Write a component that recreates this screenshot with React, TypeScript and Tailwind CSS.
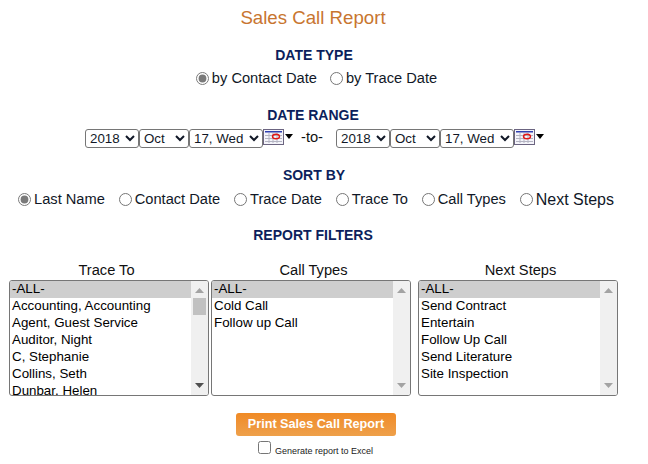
import React from "react";

const navy = "text-center font-bold text-[14px] leading-[16px] text-[#0c1f5c]";

function Radio({ label, checked, name, big }: { label: string; checked?: boolean; name: string; big?: boolean }) {
  return (
    <label className={`flex items-center leading-[17px] text-[#111827] ${big ? "text-[16px]" : "text-[14.67px]"}`}>
      <input type="radio" name={name} defaultChecked={checked} className="m-0 mr-[3px] h-[13px] w-[13px] accent-[#7a7a7a]" />
      {label}
    </label>
  );
}

function DateSel() {
  const cls = "h-[19px] rounded-[3px] border border-[#767676] bg-white text-[13.33px] text-[#111827]";
  return (
    <div className="flex items-start">
      <select className={`${cls} w-[54px]`} defaultValue="2018"><option>2018</option></select>
      <select className={`${cls} w-[50px]`} defaultValue="Oct"><option>Oct</option></select>
      <select className={`${cls} w-[74px]`} defaultValue="17, Wed"><option>17, Wed</option></select>
      <svg width="21" height="16" viewBox="0 0 21 16" className="block">
        <rect x="0.5" y="0.5" width="20" height="15" fill="#f4f4fa" stroke="#6b6480" />
        <rect x="2" y="2" width="17" height="1.5" fill="#2f3fb0" />
        <path d="M2 6.5h17M2 9.5h17M2 12.5h17M6 4v10M10 4v10M14 4v10" stroke="#b4b4c2" strokeWidth="1" />
        <ellipse cx="13" cy="7.5" rx="3.5" ry="2.2" fill="none" stroke="#e01818" strokeWidth="1.4" />
      </svg>
      <svg width="8" height="5" viewBox="0 0 8 5" className="mt-[5px] ml-[1px] block"><path d="M0 0h8L4 5z" fill="#000" /></svg>
    </div>
  );
}

function List({ title, items, active, labelClass }: { title: string; items: string[]; active?: boolean; labelClass: string }) {
  return (
    <div className="flex w-[200px] flex-col">
      <div className={`mb-[1px] text-center text-[14.67px] leading-[17px] text-[#111] ${labelClass}`}>{title}</div>
      <div role="listbox" className="flex h-[116px] w-full overflow-hidden rounded-[3px] border border-[#767676] bg-white">
        <div className="min-w-0 flex-1 overflow-hidden">
          {items.map((i, n) => (
            <div key={i} role="option" aria-selected={n === 0} className={`h-[17px] px-[2px] text-[13.33px] leading-[15px] whitespace-nowrap text-black ${n === 0 ? "bg-[#cecece]" : ""}`}>
              {i}
            </div>
          ))}
        </div>
        <div className="flex w-[17px] flex-col items-center bg-[#f0f0f0]">
          <svg width="9" height="5" viewBox="0 0 9 5" className="mt-[7px] block"><path d="M0 5h9L4.5 0z" fill="#a3a3a3" /></svg>
          {active ? <div className="mt-[5px] h-[17px] w-[13px] bg-[#c1c1c1]" /> : null}
          <svg width="9" height="5" viewBox="0 0 9 5" className="mt-auto mb-[7px] block"><path d="M0 0h9L4.5 5z" fill={active ? "#505050" : "#a3a3a3"} /></svg>
        </div>
      </div>
    </div>
  );
}

export default function App() {
  return (
    <div className="h-[464px] w-[628px] overflow-hidden bg-white font-['Liberation_Sans',Arial,sans-serif]">
      <h1 className="pt-[7px] pr-[2px] text-center text-[18.67px] leading-[21px] font-normal text-[#c8752f]">Sales Call Report</h1>
      <div className={`${navy} mt-[19px]`}>DATE TYPE</div>
      <div className="mt-[7px] flex justify-center gap-[13px] pl-[5px]">
        <Radio name="dt" label="by Contact Date" checked />
        <Radio name="dt" label="by Trace Date" />
      </div>
      <div className={`${navy} mt-[20px] pr-[2px]`}>DATE RANGE</div>
      <div className="mt-[6px] flex items-start pl-[85px]">
        <DateSel />
        <span className="mr-[13px] ml-[8px] text-[14.67px] leading-[17px] text-[#111]">-to-</span>
        <DateSel />
      </div>
      <div className={`${navy} mt-[19px]`}>SORT BY</div>
      <div className="mt-[8px] flex gap-[13.8px] pl-[18px]">
        <Radio name="s" label="Last Name" checked />
        <Radio name="s" label="Contact Date" />
        <Radio name="s" label="Trace Date" />
        <Radio name="s" label="Trace To" />
        <Radio name="s" label="Call Types" />
        <Radio name="s" label="Next Steps" big />
      </div>
      <div className={`${navy} mt-[19px] pr-[2px]`}>REPORT FILTERS</div>
      <div className="mt-[19px] flex pl-[9px]">
        <List active labelClass="pr-[5px]" title="Trace To" items={["-ALL-", "Accounting, Accounting", "Agent, Guest Service", "Auditor, Night", "C, Stephanie", "Collins, Seth", "Dunbar, Helen"]} />
        <div className="w-[2px]" />
        <List labelClass="pl-[5px]" title="Call Types" items={["-ALL-", "Cold Call", "Follow up Call"]} />
        <div className="w-[7px]" />
        <List labelClass="pl-[5px]" title="Next Steps" items={["-ALL-", "Send Contract", "Entertain", "Follow Up Call", "Send Literature", "Site Inspection"]} />
      </div>
      <div className="mt-[17px] flex justify-center pl-[4px]">
        <button className="h-[23px] w-[160px] rounded-[3px] bg-gradient-to-b from-[#f08a24] to-[#eea04a] text-[12.67px] font-bold text-white">Print Sales Call Report</button>
      </div>
      <div className="mt-[5px] flex items-start justify-center pl-[3px]">
        <input type="checkbox" className="m-0 mr-[4px] h-[13px] w-[13px]" />
        <span className="mt-[4px] text-[9px] leading-[13px] text-[#222]">Generate report to Excel</span>
      </div>
    </div>
  );
}
